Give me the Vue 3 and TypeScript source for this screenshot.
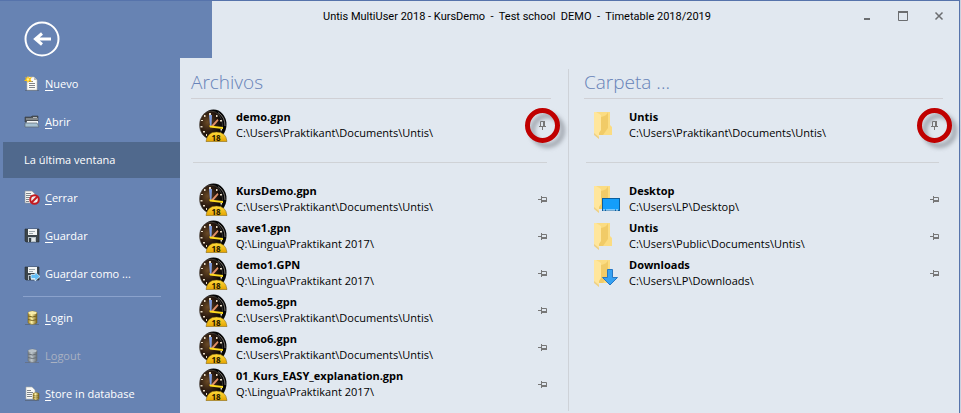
<script setup lang="ts">
interface MenuItem {
  icon?: string
  before: string
  key: string
  after: string
  disabled?: boolean
  current?: boolean
}

interface Entry {
  icon: string
  name: string
  path: string
}

interface Panel {
  id: string
  title: string
  pinned: Entry
  recent: Entry[]
}

const fileMenu: MenuItem[] = [
  { icon: 'new', before: '', key: 'N', after: 'uevo' },
  { icon: 'open', before: '', key: 'A', after: 'brir' },
  { before: 'La última ventana', key: '', after: '', current: true },
  { icon: 'close-doc', before: '', key: 'C', after: 'errar' },
  { icon: 'save', before: '', key: 'G', after: 'uardar' },
  { icon: 'save-as', before: 'Gua', key: 'r', after: 'dar como ...' },
]

const databaseMenu: MenuItem[] = [
  { icon: 'database', before: '', key: 'L', after: 'ogin' },
  { icon: 'database', before: 'L', key: 'o', after: 'gout', disabled: true },
  { icon: 'store', before: '', key: 'S', after: 'tore in database' },
]

const docs = 'C:\\Users\\Praktikant\\Documents\\Untis\\'
const lingua = 'Q:\\Lingua\\Praktikant 2017\\'

const panels: Panel[] = [
  {
    id: 'files',
    title: 'Archivos',
    pinned: { icon: 'clock', name: 'demo.gpn', path: docs },
    recent: [
      { icon: 'clock', name: 'KursDemo.gpn', path: docs },
      { icon: 'clock', name: 'save1.gpn', path: lingua },
      { icon: 'clock', name: 'demo1.GPN', path: lingua },
      { icon: 'clock', name: 'demo5.gpn', path: docs },
      { icon: 'clock', name: 'demo6.gpn', path: docs },
      { icon: 'clock', name: '01_Kurs_EASY_explanation.gpn', path: lingua },
    ],
  },
  {
    id: 'folders',
    title: 'Carpeta ...',
    pinned: { icon: 'folder', name: 'Untis', path: docs },
    recent: [
      { icon: 'folder-desktop', name: 'Desktop', path: 'C:\\Users\\LP\\Desktop\\' },
      { icon: 'folder', name: 'Untis', path: 'C:\\Users\\Public\\Documents\\Untis\\' },
      { icon: 'folder-download', name: 'Downloads', path: 'C:\\Users\\LP\\Downloads\\' },
    ],
  },
]

const menus = [fileMenu, databaseMenu]
const windowTitle = 'Untis MultiUser 2018 - KursDemo  -  Test school  DEMO  -  Timetable 2018/2019'
</script>

<template>
  <svg class="sprite" aria-hidden="true">
    <defs>
      <radialGradient id="dial" cx="0.35" cy="0.4" r="0.65">
        <stop offset="0" stop-color="#6b4a25" />
        <stop offset="0.55" stop-color="#2c1b10" />
        <stop offset="1" stop-color="#050404" />
      </radialGradient>
      <linearGradient id="badge" x1="0" y1="0" x2="0" y2="1">
        <stop offset="0" stop-color="#ffdc3c" />
        <stop offset="1" stop-color="#e5a400" />
      </linearGradient>
      <linearGradient id="brass" x1="0" y1="0" x2="1" y2="0">
        <stop offset="0" stop-color="#a48526" />
        <stop offset="0.4" stop-color="#fff3a8" />
        <stop offset="1" stop-color="#77601a" />
      </linearGradient>

      <symbol id="clock" viewBox="0 -1 30 34">
        <ellipse cx="15.500" cy="15.500" rx="13" ry="15" fill="#050505" />
        <ellipse cx="13" cy="16" rx="11.500" ry="14" fill="url(#dial)" stroke="#5c5853" stroke-width="0.600" />
        <path d="M20 3.500Q27 8 27 17" fill="none" stroke="#77716c" stroke-width="1" />
        <g fill="#e9ddc8">
          <path d="M11 4h2v2h-2zM6 6h1.500v2H6zM3 11h2v1H3zM2.500 17h2v1.500h-2zM5 22h2v1.500H5zM18 6h1.500v2H18zM22 11h2v1.500h-2zM22.500 20h1.500v1.500h-1.500zM8 25h1v2H8z" />
        </g>
        <path d="M11 6h3l-.5 11H12z" fill="#7f9de0" />
        <path d="M13 17 19.500 10l1 1.500-6 7z" fill="#e2916a" />
        <path d="M11 16.500 25 18v2l-13-1.500z" fill="#ffdc1e" />
        <path d="M8 32.500Q9 23 18.500 23T29 32.500z" fill="url(#badge)" stroke="#7b5b00" stroke-width="0.500" />
        <text x="18" y="32" text-anchor="middle" class="badge-text">18</text>
      </symbol>

      <symbol id="folder-base" viewBox="0 0 30 34">
        <path d="M2 3h16v13l2 2v8H2z" fill="#fbdc82" />
        <path d="M2 3h2l5 3v18l-2 2v4l-5-5z" fill="#ffe69c" />
        <path d="M9 8q6-1 7-5v16l-5 7H7V24l2-3z" fill="#f1cb67" />
        <path d="M2 24l5 4v2l-5-4z" fill="#edd087" />
      </symbol>
      <symbol id="folder" viewBox="-1 -1 30 34">
        <use href="#folder-base" width="30" height="34" />
      </symbol>
      <symbol id="folder-desktop" viewBox="-1 -1 30 34">
        <use href="#folder-base" width="30" height="34" />
        <rect x="10.500" y="15.500" width="17" height="12" fill="#149efb" stroke="#0a5f9f" />
        <path d="M11 27h15" stroke="#dff1ff" stroke-dasharray="2 1 9 1" />
      </symbol>
      <symbol id="folder-download" viewBox="-1 -1 30 34">
        <use href="#folder-base" width="30" height="34" />
        <path d="M15.500 12.500h5v8h5L18 28l-7.500-7.500h5z" fill="#35a1f2" stroke="#2577c4" />
      </symbol>

      <symbol id="page" viewBox="0 0 16 16">
        <path d="M3 1h7l3 3v10H3z" fill="#fbfbf8" stroke="#b9b6ad" stroke-width="0.600" />
        <path d="M10 1v3h3z" fill="#bdbbb4" />
        <path d="M5 5.500h4M5 7.500h6M5 9.500h6M5 11.500h6" stroke="#818489" />
      </symbol>
      <symbol id="new" viewBox="0 0 16 16">
        <path d="M1 14.500h14" stroke="#596b88" />
        <use href="#page" width="16" height="16" />
        <path d="M4 0l1 2 3-1-1.500 2.500L8 6 5 5 4 7 3 5 0 5l2-2-1-2 2 1z" fill="#ffc20d" />
        <circle cx="4" cy="3.500" r="1.200" fill="#fff28a" />
      </symbol>
      <symbol id="open" viewBox="0 0 16 16">
        <path d="M1 3h6l1-1h6v6H1z" fill="#4d5257" stroke="#333a40" stroke-width="0.600" />
        <path d="M2 5h12M9 3.500h4" stroke="#b5b9bb" />
        <path d="M3 7h11v5H2z" fill="#f3f6f7" />
        <path d="M1 9h12l2 4H1z" fill="#a6c1d2" stroke="#5d6870" stroke-width="0.700" />
      </symbol>
      <symbol id="close-doc" viewBox="0 0 16 16">
        <path d="M1 1h7l3 3v9H1z" fill="#f5f5f2" stroke="#8e9298" stroke-width="0.600" />
        <path d="M2 3.500h5M2 5.500h7M2 7.500h4M2 9.500h3M2 11.500h3" stroke="#7f858b" />
        <circle cx="10.500" cy="9.500" r="4.300" fill="#eee" stroke="#c41a20" stroke-width="2" />
        <path d="M7.500 12.500l6-6" stroke="#c41a20" stroke-width="2" />
      </symbol>
      <symbol id="save" viewBox="0 0 16 16">
        <path d="M1 1h14v13H2l-1-1z" fill="#3c454b" stroke="#272e33" stroke-width="0.600" />
        <path d="M4 1h9v6H4z" fill="#f2f4f4" />
        <path d="M5 3.500h6M5 5.500h4" stroke="#9da7ad" />
        <path d="M4 9h8v5H4z" fill="#b7c1c7" />
        <path d="M5 10h2v4H5z" fill="#374147" />
        <path d="M8 10h3v3H8z" fill="#e3e8ea" />
      </symbol>
      <symbol id="save-as" viewBox="0 0 16 16">
        <use href="#save" width="16" height="16" />
        <path d="M7 8.500h4V6l5 4.500-5 4.500v-2.500H7z" fill="#62bdf5" stroke="#eaf6ff" stroke-width="0.700" />
      </symbol>
      <symbol id="database" viewBox="0 0 16 16">
        <path d="M1 14.500h14" stroke="#596b88" />
        <path d="M4 2.500q4.500-3 9 0V13q-4.500 3-9 0z" fill="url(#brass)" stroke="#766321" stroke-width="0.500" />
        <ellipse cx="8.500" cy="2.800" rx="4.200" ry="1.500" fill="#f9edaa" />
        <path d="M4 6q4.500 2 9 0M4 9.500q4.500 2 9 0" fill="none" stroke="#766321" />
      </symbol>
      <symbol id="store" viewBox="0 0 16 16">
        <path d="M1 14.500h14" stroke="#596b88" />
        <path d="M2 1h6l3 3v9H2z" fill="#fafaf7" stroke="#a9aba9" stroke-width="0.600" />
        <path d="M3 4.500h4M3 6.500h6M3 8.500h5M3 10.500h5" stroke="#7d838a" />
        <path d="M9 7.500q3-2 6 0V13q-3 2-6 0z" fill="url(#brass)" stroke="#766321" stroke-width="0.500" />
        <path d="M9 9.500q3 1 6 0M9 11.500q3 1 6 0" fill="none" stroke="#766321" stroke-width="0.700" />
      </symbol>

      <symbol id="pin" viewBox="0 0 9 9">
        <path d="M0 4.500h3M3.500 1v7M4 2.500h4.500v4H4" fill="none" stroke="#777" />
        <path d="M4 6h5" stroke="#777" stroke-width="2" />
      </symbol>
      <symbol id="pin-down" viewBox="0 0 9 9">
        <path d="M4.500 9V6M1 5.500h7M2.500 5V.5h4V5" fill="none" stroke="#777" />
        <path d="M6 0v5" stroke="#777" stroke-width="2" />
      </symbol>
    </defs>
  </svg>

  <div class="window">
    <aside class="sidebar">
      <button class="back" type="button" aria-label="Volver">
        <svg viewBox="0 0 36 36" aria-hidden="true">
          <circle cx="18" cy="18" r="16.500" />
          <path class="arrow" d="M27 18H12M18 12.500 11.500 18l6.500 5.500" />
        </svg>
      </button>
      <nav class="menus">
        <ul v-for="(menu, i) in menus" :key="i" class="menu">
          <li v-for="item in menu" :key="item.before + item.key + item.after">
            <button
              class="menu-item"
              :class="{ current: item.current }"
              type="button"
              :disabled="item.disabled"
            >
              <svg v-if="item.icon" class="menu-icon" aria-hidden="true"><use :href="'#' + item.icon" /></svg>
              <span>{{ item.before }}<u v-if="item.key">{{ item.key }}</u>{{ item.after }}</span>
            </button>
          </li>
        </ul>
      </nav>
    </aside>

    <div class="content">
      <header class="titlebar">
        <div class="tab"></div>
        <h1 class="title">{{ windowTitle }}</h1>
        <div class="controls">
          <button type="button" aria-label="Minimizar">
            <svg viewBox="0 0 10 10"><path d="M2 8h6" stroke-width="2" /></svg>
          </button>
          <button type="button" aria-label="Maximizar">
            <svg viewBox="0 0 10 10"><path d="M.5 1v8.500h9V1" /><path d="M0 1h10" stroke-width="2" /></svg>
          </button>
          <button type="button" aria-label="Cerrar">
            <svg viewBox="0 0 10 10"><path d="M1.500 1.500l7 7M8.500 1.500l-7 7" stroke-width="1.500" /></svg>
          </button>
        </div>
      </header>

      <main class="panels">
        <section v-for="panel in panels" :key="panel.id" class="panel">
          <h2>{{ panel.title }}</h2>
          <div class="pinned">
            <div class="entry">
              <svg class="entry-icon" aria-hidden="true"><use :href="'#' + panel.pinned.icon" /></svg>
              <a class="entry-text" href="#">
                <strong>{{ panel.pinned.name }}</strong>
                <span>{{ panel.pinned.path }}</span>
              </a>
              <button class="pin ringed" type="button" aria-label="Desanclar">
                <svg aria-hidden="true"><use href="#pin-down" /></svg>
              </button>
            </div>
          </div>
          <ul class="recent">
            <li v-for="entry in panel.recent" :key="entry.name" class="entry">
              <svg class="entry-icon" aria-hidden="true"><use :href="'#' + entry.icon" /></svg>
              <a class="entry-text" href="#">
                <strong>{{ entry.name }}</strong>
                <span>{{ entry.path }}</span>
              </a>
              <button class="pin" type="button" aria-label="Anclar">
                <svg aria-hidden="true"><use href="#pin" /></svg>
              </button>
            </li>
          </ul>
        </section>
      </main>
    </div>
  </div>
</template>

<style>
body {
  margin: 0;
  background: #c9d1df;
}
</style>

<style scoped>
.sprite {
  position: absolute;
  width: 0;
  height: 0;
}

.badge-text {
  font: bold 8px "Open Sans", sans-serif;
  fill: #1c1500;
}

.window {
  box-sizing: border-box;
  display: grid;
  grid-template-columns: 180px minmax(0, 1fr);
  min-height: 100vh;
  margin-right: 1px;
  border-top: 1px solid #5673ab;
  border-right: 1px solid #5673ab;
  background: #e1e8f0;
  color: #000;
  font: 11px/16px "Open Sans", "Noto Sans", sans-serif;
}

ul {
  margin: 0;
  padding: 0;
  list-style: none;
}

button {
  padding: 0;
  border: 0;
  background: none;
  color: inherit;
  font: inherit;
}

svg {
  display: block;
}

.sidebar {
  background: #6783b3;
  color: #fff;
}

.back {
  display: block;
  width: 36px;
  height: 36px;
  margin: 20px 0 9px 24px;
}

.back svg {
  fill: none;
  stroke: #fff;
  stroke-width: 2;
}

.back .arrow {
  stroke-width: 3;
}

.menu {
  display: grid;
  gap: 2px;
}

.menu + .menu::before {
  content: "";
  height: 1px;
  margin: 4px 19px 1px 23px;
  background: #8ba2cc;
}

.menu-item {
  display: flex;
  align-items: center;
  gap: 5px;
  box-sizing: border-box;
  width: calc(100% - 3px);
  height: 36px;
  margin-left: 3px;
  padding-left: 21px;
  text-align: left;
}

.menu-item.current {
  background: #50698d;
}

.menu-item:disabled {
  color: #a9b1c2;
}

.menu-item:disabled .menu-icon {
  filter: grayscale(0.7);
  opacity: 0.6;
}

.menu-icon {
  width: 16px;
  height: 16px;
}

.menu-item u {
  text-underline-offset: 2px;
}

.titlebar {
  display: flex;
  align-items: flex-start;
  height: 57px;
}

.tab {
  width: 32px;
  height: 100%;
  background: #6783b3;
}

.title {
  flex: 1;
  margin: 8px 0 0;
  font-family: Roboto, "Open Sans", sans-serif;
  font-size: 11px;
  font-weight: 400;
  text-align: center;
  white-space: pre;
}

.controls {
  display: flex;
  gap: 26px;
  padding: 10px 15px 0 40px;
}

.controls svg {
  width: 10px;
  height: 10px;
  fill: none;
  stroke: #6b6d70;
}

.panels {
  display: grid;
  grid-template-columns: 388px minmax(0, 1fr);
  padding-top: 11px;
}

.panel {
  padding: 0 17px 0 11px;
}

.panel + .panel {
  padding: 0 16px 0 15px;
  border-left: 1px solid #ced2d8;
}

h2 {
  margin: 0;
  padding-bottom: 2px;
  border-bottom: 1px solid #d0d0d5;
  color: #6783b8;
  font-size: 19px;
  font-weight: 300;
  line-height: 27px;
}

.pinned {
  margin: 0 4px 0 2px;
  padding: 10px 0 21px;
  border-bottom: 1px solid #cfd2d6;
}

.recent {
  display: grid;
  gap: 5px;
  margin: 0 4px 0 2px;
  padding: 20px 0 11px;
}

.entry {
  display: flex;
  align-items: center;
  height: 32px;
  padding-left: 5px;
}

.entry-icon {
  flex: none;
  width: 30px;
  height: 34px;
}

.entry-text {
  display: grid;
  flex: 1;
  padding-left: 8px;
  color: inherit;
  text-decoration: none;
  white-space: nowrap;
}

.pin {
  position: relative;
  flex: none;
}

.pin svg {
  width: 9px;
  height: 9px;
}

/* Highlight ring drawn around the pinned marker */
.ringed::after {
  content: "";
  position: absolute;
  inset: -13px;
  border: 5px solid #c00000;
  border-radius: 50%;
  filter: drop-shadow(5px 5px 2px #777b8399);
}
</style>
